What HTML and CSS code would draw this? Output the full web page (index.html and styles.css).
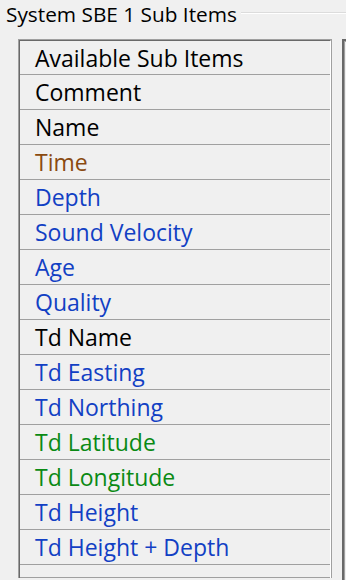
FILE: index.html
```html
<!DOCTYPE html>
<html>
    <head>
        <meta charset="utf-8" />
        <link rel="stylesheet" href="styles.css">
    </head>

    <body>
        <div class="group">
            <div class="group-title">
                <span class="caption">System SBE 1 Sub Items</span>
                <span class="rule"></span>
            </div>

            <div class="panels">
                <div class="list">
                    <div class="list-inner">
                        <div class="row header">Available Sub Items</div>
                        <div class="row">Comment</div>
                        <div class="row">Name</div>
                        <div class="row brown">Time</div>
                        <div class="row blue">Depth</div>
                        <div class="row blue">Sound Velocity</div>
                        <div class="row blue">Age</div>
                        <div class="row blue">Quality</div>
                        <div class="row">Td Name</div>
                        <div class="row blue">Td Easting</div>
                        <div class="row blue">Td Northing</div>
                        <div class="row green">Td Latitude</div>
                        <div class="row green">Td Longitude</div>
                        <div class="row blue">Td Height</div>
                        <div class="row blue">Td Height + Depth</div>
                    </div>
                </div>
                <div class="side"></div>
            </div>
        </div>
    </body>
</html>
```

FILE: styles.css
```css
html, body {
    margin: 0;
    padding: 0;
    height: 100%;
    overflow: hidden;
    background: #f0f0f0;
}

body {
    font-family: "Open Sans", "Noto Sans", sans-serif;
    color: #000;
}

.group-title {
    display: flex;
    align-items: center;
    height: 28px;
    padding-left: 6px;
}

.caption {
    font-size: 20.8px;
    line-height: 28px;
    padding-right: 4px;
}

.rule {
    flex: 1;
    height: 1px;
    background: #dcdcdc;
    border-bottom: 1px solid #fff;
    margin-top: -2px;
}

.panels {
    display: flex;
    padding-top: 11px;
    padding-left: 18px;
    gap: 10px;
}

.list {
    width: 312px;
    height: 537px;
    border: 1px solid #a0a0a0;
    background: #f0f0f0;
}

.list-inner {
    height: 100%;
    border-top: 1px solid #696969;
    border-left: 1px solid #696969;
    border-right: 1px solid #fff;
}

.row {
    height: 33px;
    padding-top: 1px;
    line-height: 33px;
    border-bottom: 1px solid #a0a0a0;
    padding-left: 15px;
    font-size: 23px;
    white-space: nowrap;
}

.header {
    height: 32px;
    line-height: 32px;
}

.brown {
    color: #8a4a10;
}

.blue {
    color: #1240c4;
}

.green {
    color: #0a8a14;
}

.side {
    flex: 1;
    height: 541px;
    border-top: 2px solid #696969;
    border-left: 2px solid #696969;
    box-shadow: inset 1px 1px 0 #a0a0a0;
}
```
